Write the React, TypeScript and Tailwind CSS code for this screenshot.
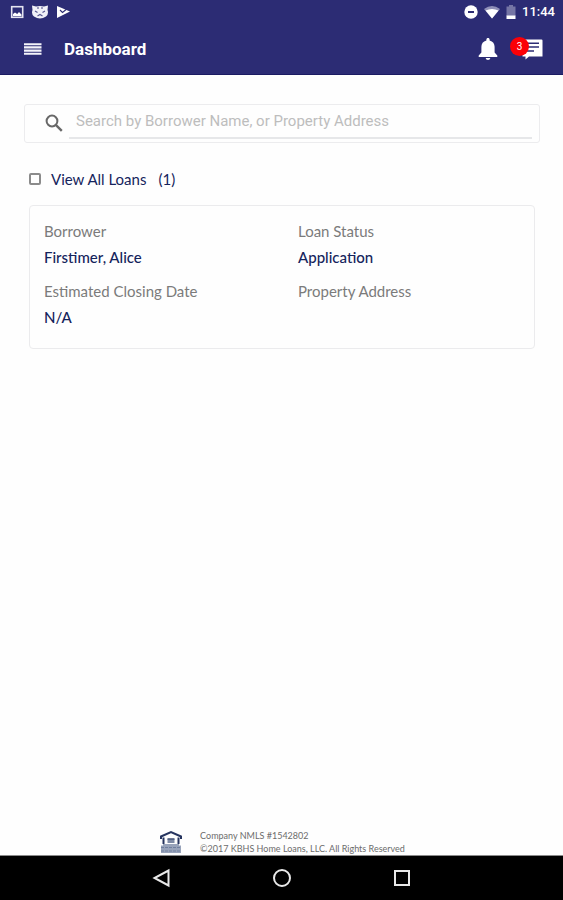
import { useState } from 'react';

type Loan = {
  id: string;
  borrower: string;
  status: string;
  closingDate: string;
  address: string;
};

const loans: Loan[] = [
  { id: '1', borrower: 'Firstimer, Alice', status: 'Application', closingDate: 'N/A', address: '' },
];

function StatusBar() {
  return (
    <div className="flex h-6 items-center justify-between pl-[10px] pr-2 text-white">
      <div className="flex items-center gap-[7px]">
        <svg viewBox="0 0 14 14" className="size-[14px]" aria-hidden>
          <rect x="1.7" y="1.7" width="11" height="10.6" fill="none" stroke="#e4e4f0" strokeWidth="1.6" />
          <path d="M3 11V9L5 7.5 7.2 9 9 7 11.5 9.5V11z" fill="#fff" />
        </svg>
        <svg viewBox="0 0 18 14" className="h-[14px] w-[18px]" aria-hidden>
          <path d="M1 0.5 5 1.5Q9 0.5 13 1.5L17 0.5 16.5 5Q18 9 15 11.5 9 15.5 3 11.5 0 9 1.5 5z" fill="#f1f1f8" />
          <path d="M7 2V4M11 2V4M4 6 6.5 7.5M14 6 11.5 7.5M6.5 11 9 9.5 11.5 11" fill="none" stroke="#55558f" strokeWidth="1.1" />
        </svg>
        <svg viewBox="0 0 14 14" className="size-[14px]" aria-hidden>
          <path d="M1 1 14 6.5 7 10 1 13z" fill="#fff" />
          <path d="M4 5 6.5 7.5 12 3" fill="none" stroke="#2c2c74" strokeWidth="1.1" />
        </svg>
      </div>
      <div className="flex items-center">
        <svg viewBox="0 0 14 14" className="size-[14px]" aria-hidden>
          <circle cx="7" cy="7" r="6.7" fill="#fff" />
          <rect x="4" y="6" width="6" height="2" fill="#2c2c74" />
        </svg>
        <svg viewBox="0 0 16 14" className="ml-[6px] h-[14px] w-4" aria-hidden>
          <path d="M0 4Q8-2 16 4L8 13.5z" fill="#8f8fb8" />
          <path d="M1.5 5.5Q8 2.5 14.5 5.5L8 13.5z" fill="#fff" />
        </svg>
        <svg viewBox="0 0 10 14" className="ml-[6px] h-[14px] w-[10px]" aria-hidden>
          <path d="M3 0H7V1.5H9.5V11H0.5V1.5H3z" fill="#7575a5" />
          <path d="M0.5 10.5H9.5V14H0.5z" fill="#fff" />
        </svg>
        <span className="ml-[6px] text-[13px] font-medium">11:44</span>
      </div>
    </div>
  );
}

function Toolbar() {
  return (
    <div className="flex h-[50px] items-center pl-6 pr-5 text-white">
      <button type="button" aria-label="Menu">
        <svg viewBox="0 0 18 12" className="h-3 w-[18px]" aria-hidden>
          <path d="M0 1.2H17.5M0 4.4H17.5M0 7.6H17.5M0 10.8H17.5" stroke="#f4f4fa" strokeWidth="2.1" />
        </svg>
      </button>
      <h1 className="ml-[22px] flex-1 pt-px text-[17px] font-bold">Dashboard</h1>
      <button type="button" aria-label="Notifications" className="mr-3">
        <svg viewBox="0 0 20 24" className="h-6 w-5" fill="#fff" aria-hidden>
          <path d="M10 1C9 1 8.4 1.7 8.4 2.6V3.4C5 4.2 3.4 6.8 3.4 9.8V15.5L0.7 18.5V20H19.3V18.5L16.6 15.5V9.8C16.6 6.8 15 4.2 11.6 3.4V2.6C11.6 1.7 11 1 10 1zM7.6 21H12.4Q12 23 10 23T7.6 21z" />
        </svg>
      </button>
      <button type="button" aria-label="Messages, 3 unread" className="relative flex h-6 w-[33px] items-center justify-end">
        <svg viewBox="0 0 22 22" className="size-[22px]" aria-hidden>
          <path d="M2.5 1.5H20.5Q21.5 1.5 21.5 2.5V18.5H8L4.5 21.5V18.5H1.5V2.5Q1.5 1.5 2.5 1.5z" fill="#fff" />
          <path d="M5 5.2H18M5 9H18M5 13H13" stroke="#2c2c74" strokeWidth="1.5" />
        </svg>
        <span className="absolute left-0 top-0 flex size-[19px] items-center justify-center rounded-full bg-[#fb0007] text-[10px] text-white">3</span>
      </button>
    </div>
  );
}

function Field({ label, value }: { label: string; value: string }) {
  return (
    <div className="min-h-[52px] leading-[26px]">
      <dt className="text-[#7b7b7b]">{label}</dt>
      <dd className="font-medium text-[#15245c]">{value}</dd>
    </div>
  );
}

export default function App() {
  const [search, setSearch] = useState('');
  const [viewAll, setViewAll] = useState(false);

  const q = search.toLowerCase();
  const filtered = loans.filter(
    l => !q || l.borrower.toLowerCase().includes(q) || l.address.toLowerCase().includes(q)
  );

  return (
    <div className="flex min-h-screen flex-col bg-[#fefefe] font-['Lato',sans-serif] text-[15px]">
      <header className="border-b border-[#1b1b62] bg-[#2c2c74] font-['Roboto',sans-serif]">
        <StatusBar />
        <Toolbar />
      </header>

      <main className="flex-1 pl-6 pr-[23px] pt-[29px]">
        {/* Search */}
        <div className="flex h-[39px] items-start rounded-[3px] border border-[#ececee] pl-5 pr-[7px]">
          <svg viewBox="0 0 18 18" className="mt-[9px] size-[18px]" fill="none" stroke="#686868" aria-hidden>
            <circle cx="7" cy="7" r="5.4" strokeWidth="2" />
            <path d="M10.8 10.8 16.8 16.8" strokeWidth="2.4" />
          </svg>
          <input
            type="search"
            aria-label="Search loans"
            placeholder="Search by Borrower Name, or Property Address"
            value={search}
            onChange={e => setSearch(e.target.value)}
            className="ml-[6px] h-[34px] min-w-0 flex-1 border-b-2 border-[#e6e7e9] pl-[7px] font-['Roboto',sans-serif] text-[15px] text-[#444] outline-none placeholder:text-[#bdbdbd]"
          />
        </div>

        <label className="mt-6 flex items-center pl-[5px] leading-6 text-[#15245c]">
          <input
            type="checkbox"
            checked={viewAll}
            onChange={e => setViewAll(e.target.checked)}
            className="size-3 appearance-none rounded-[2px] border-2 border-[#8b8b8b] checked:bg-[#2c2c74]"
          />
          <span className="ml-[10px]">View All Loans</span>
          <span className="ml-3">({filtered.length})</span>
        </label>

        <div className="mt-[14px] flex flex-col gap-3 px-[5px]">
          {filtered.map(l => (
            <dl key={l.id} className="grid grid-cols-2 gap-x-8 gap-y-2 rounded border border-[#ebebed] px-[14px] pb-[18px] pt-3">
              <Field label="Borrower" value={l.borrower} />
              <Field label="Loan Status" value={l.status} />
              <Field label="Estimated Closing Date" value={l.closingDate} />
              <Field label="Property Address" value={l.address} />
            </dl>
          ))}
        </div>
      </main>

      <footer className="flex items-center justify-center gap-[18px] pl-[2px] text-[9px] leading-[13px] text-[#6c6c6c]">
        <svg viewBox="0 0 22 24" className="h-6 w-[22px]" aria-label="Equal Housing Lender" role="img">
          <path d="M1 9V6.5L11 2 21 6.5V9M3.5 7.5V14M18.5 7.5V14" fill="none" stroke="#26345f" strokeWidth="2" />
          <path d="M7.5 9H14.5V13H7.5z" fill="#7f8ba6" />
          <path d="M7.5 9H14.5" stroke="#4a587c" strokeWidth="1.6" />
          <path d="M1 15.5H3V14H19V15.5H21V23H1z" fill="#98a3ba" />
          <path d="M1 17.5H21M1 21H21" stroke="#71809f" strokeWidth="1" strokeDasharray="3 1" />
        </svg>
        <div className="pt-px">
          <p>Company NMLS #1542802</p>
          <p>©2017 KBHS Home Loans, LLC. All Rights Reserved</p>
        </div>
      </footer>

      <nav className="flex h-[45px] items-center justify-center gap-[100px] border-t border-[#8a8a8a] bg-black">
        <button type="button" aria-label="Back">
          <svg viewBox="0 0 20 20" className="size-5" fill="none" stroke="#e8e8e8" strokeWidth="2" aria-hidden>
            <path d="M16.5 2.5V17.5L2.5 10z" />
          </svg>
        </button>
        <button type="button" aria-label="Home">
          <svg viewBox="0 0 20 20" className="size-5" fill="none" stroke="#e8e8e8" strokeWidth="2" aria-hidden>
            <circle cx="10" cy="10" r="8" />
          </svg>
        </button>
        <button type="button" aria-label="Recent apps">
          <svg viewBox="0 0 20 20" className="size-5" fill="none" stroke="#e8e8e8" strokeWidth="2" aria-hidden>
            <rect x="3" y="3" width="14" height="14" />
          </svg>
        </button>
      </nav>
    </div>
  );
}
